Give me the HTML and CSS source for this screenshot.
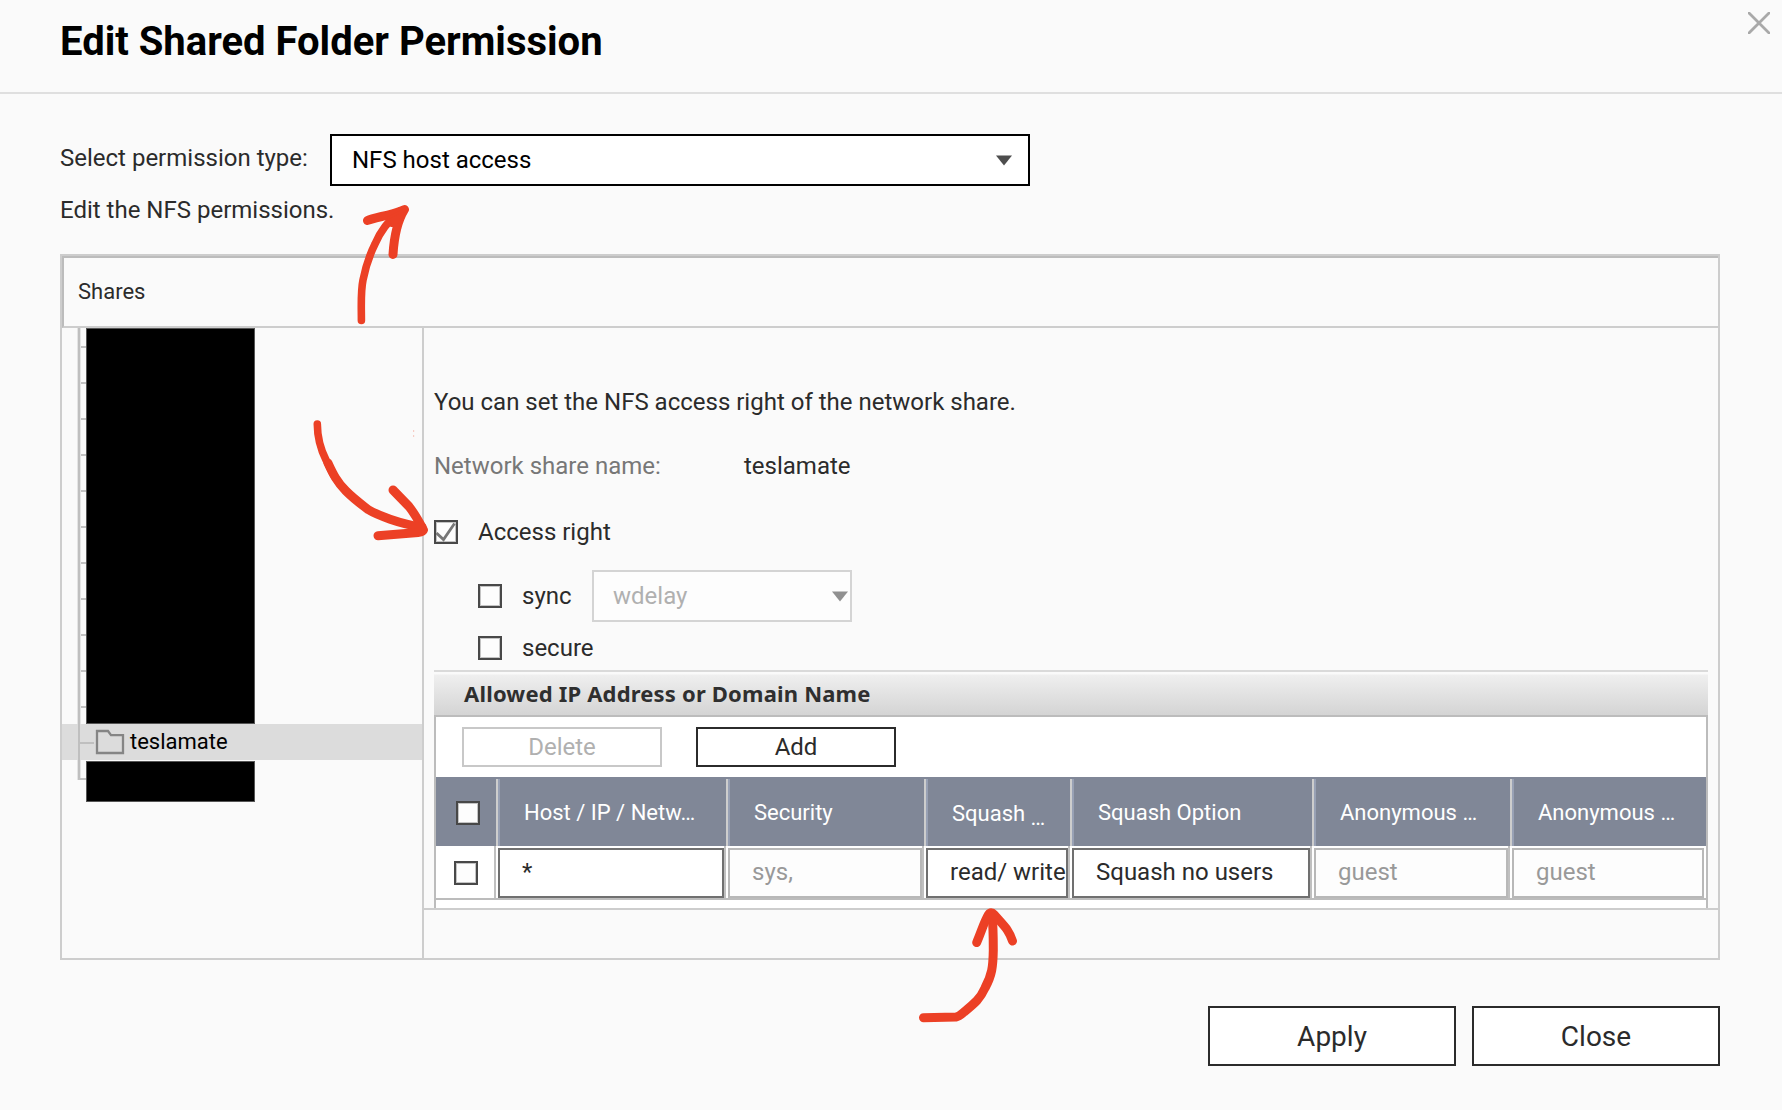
FILE: index.html
```html
<!DOCTYPE html>
<html lang="en">
<head>
<meta charset="utf-8">
<title>Edit Shared Folder Permission</title>
<link rel="stylesheet" href="styles.css">
</head>
<body>
<main class="dialog">
  <header class="dialog-header">
    <h1 class="title">Edit Shared Folder Permission</h1>
    <svg class="close-icon" viewBox="0 0 22 22" aria-label="Close"><path d="M0 0L22 22M22 0L0 22"/></svg>
  </header>

  <section class="type-row">
    <span class="type-label">Select permission type:</span>
    <div class="select type-select"><span>NFS host access</span><svg class="caret" viewBox="0 0 16 11"><path d="M0 0.5H16L8 10.5Z"/></svg></div>
  </section>
  <p class="hint">Edit the NFS permissions.</p>

  <section class="panel">
    <div class="panel-head">Shares</div>
    <div class="panel-body">
      <nav class="tree">
        <div class="tree-group">
          <div class="tree-ticks"></div>
          <div class="redacted"></div>
        </div>
        <div class="tree-item">
          <span class="branch"></span>
          <svg class="folder" viewBox="0 0 30 26"><path d="M2 2H13L16 6.2H28V24H2Z"/></svg>
          <span>teslamate</span>
        </div>
        <div class="tree-group tail">
          <div class="tree-end"></div>
          <div class="redacted"></div>
        </div>
      </nav>

      <div class="details">
        <div class="details-main">
          <p class="intro">You can set the NFS access right of the network share.</p>
          <div class="share-name"><span class="share-label">Network share name:</span><span>teslamate</span></div>
          <div class="check-row access">
            <span class="checkbox"><svg viewBox="0 0 20 20"><path d="M0.5 11L7.5 17.5L18.5 1.5"/></svg></span><span>Access right</span>
          </div>
          <div class="check-row sync">
            <span class="checkbox"></span><span class="sync-text">sync</span>
            <div class="select delay-select"><span>wdelay</span><svg class="caret" viewBox="0 0 16 11"><path d="M0 0.5H16L8 10.5Z"/></svg></div>
          </div>
          <div class="check-row secure"><span class="checkbox"></span><span>secure</span></div>

          <div class="hosts">
            <div class="hosts-title"><span>Allowed IP Address or Domain Name</span></div>
            <div class="hosts-body">
              <div class="toolbar">
                <button class="btn small disabled">Delete</button>
                <button class="btn small">Add</button>
              </div>
              <div class="grid grid-head">
                <div class="th th-check"><span class="checkbox"></span></div>
                <div class="th">Host / IP / Netw…</div>
                <div class="th">Security</div>
                <div class="th th-low">Squash <span class="dots">…</span></div>
                <div class="th">Squash Option</div>
                <div class="th">Anonymous …</div>
                <div class="th">Anonymous …</div>
              </div>
              <div class="grid grid-row">
                <div class="td td-check"><span class="checkbox"></span></div>
                <div class="td"><div class="field">*</div></div>
                <div class="td"><div class="field muted">sys,</div></div>
                <div class="td"><div class="field">read/ write</div></div>
                <div class="td"><div class="field">Squash no users</div></div>
                <div class="td"><div class="field muted">guest</div></div>
                <div class="td"><div class="field muted">guest</div></div>
              </div>
            </div>
          </div>
        </div>
      </div>
    </div>
  </section>

  <footer class="actions">
    <button class="btn large">Apply</button>
    <button class="btn large">Close</button>
  </footer>

  <svg class="annotations" viewBox="0 0 1782 1110">
    <path class="thin" d="M361.4 320.5C361.4 306 360.500 292 363 280C366 265 370 254 375 244C380 232 388 221 400 211"/>
    <path d="M367.500 220.500C375 217 390 216 404.500 209.500C398 220 394 238 393 254.500"/>
    <path class="fill" d="M388 218L404 210L398 226L391 226Z"/>
    <path class="thin" d="M317.300 424C317.400 440 321 450 326 460C332 473 336 481 346 491"/>
    <path d="M328 463C333 474 337 482 346 491C354 499 361 504 368 509.500C377 515 400 524 422 527"/>
    <path d="M393 490L409 506.500Q415 514 423.500 530Q423 532 418 532.500L378 535.700"/>
    <path d="M923.500 1017.700L956 1017Q959 1016.500 964 1012C975 1003 980 999 985 988C992 975 993 967 993.300 950C993.300 935 993 924 992 914"/>
    <path d="M976.700 942.500C982 930 984 922 988.500 914.500Q991 911 994 914.500C1005 927 1009 930 1012.500 941"/>
    <path class="specks" d="M413 431h1.200M413 436h1.200"/>
  </svg>
</main>
</body>
</html>
```
FILE: styles.css
```css
* { box-sizing: border-box; }

body {
  margin: 0;
  background: #fafafa;
  color: #2b2b2b;
  font: 24px Roboto, "Liberation Sans", sans-serif;
}

p, h1 { margin: 0; }

.dialog {
  position: relative;
  width: 1782px;
  height: 1110px;
  overflow: hidden;
}

.dialog-header {
  display: flex;
  justify-content: space-between;
  align-items: flex-start;
  height: 94px;
  padding: 0 12px 0 60px;
  border-bottom: 2px solid #dfdfdf;
}

.title {
  color: #000;
  font-size: 40px;
  font-weight: 700;
  line-height: 84px;
  white-space: nowrap;
}

.close-icon {
  width: 22px;
  height: 22px;
  margin-top: 12px;
  fill: none;
  stroke: #a9a9a9;
  stroke-width: 2.8;
}

.type-row {
  display: flex;
  align-items: flex-start;
  margin-top: 40px;
  padding-left: 60px;
}

.type-label {
  width: 270px;
  line-height: 48px;
  white-space: nowrap;
}

.select {
  display: flex;
  align-items: center;
  justify-content: space-between;
  height: 52px;
  border: 2px solid #000;
  background: #fff;
}

.caret {
  width: 16px;
  height: 11px;
  fill: #4d4d4d;
}

.type-select {
  width: 700px;
  padding: 0 16px 0 20px;
  color: #000;
}

.hint {
  padding-left: 60px;
  line-height: 48px;
}

.panel {
  width: 1660px;
  height: 706px;
  margin: 20px 0 0 60px;
  border: 2px solid #cdcdcd;
}

.panel-head {
  height: 72px;
  padding-left: 14px;
  border-top: 2px solid #bcbcbc;
  border-left: 2px solid #bcbcbc;
  border-bottom: 2px solid #cdcdcd;
  font-size: 22px;
  line-height: 68px;
}

.panel-body {
  display: flex;
  height: 630px;
}

.tree {
  width: 362px;
  border-right: 2px solid #cdcdcd;
}

.tree-group {
  display: flex;
  height: 396px;
  padding-left: 16px;
}

.tree-ticks {
  width: 8px;
  border-left: 2px solid #bfbfbf;
  background: repeating-linear-gradient(to bottom, transparent 0 18px, #c2c2c2 18px 20px, transparent 20px 36px);
  box-shadow: -1px 0 #e4e4e4, inset 1px 0 #e4e4e4;
}

.redacted {
  width: 169px;
  height: 396px;
  background: #000;
  border: 1px solid #555;
}

.tree-item {
  display: flex;
  align-items: center;
  height: 36px;
  padding-left: 16px;
  background: #dcdcdc;
  color: #000;
  font-size: 22px;
  line-height: 34px;
}

.branch {
  width: 16px;
  height: 36px;
  border-left: 2px solid #bfbfbf;
  background: linear-gradient(#bfbfbf, #bfbfbf) 0 18px / 14px 2px no-repeat;
}

.folder {
  width: 30px;
  height: 26px;
  margin: 0 5px 0 1px;
  fill: none;
  stroke: #858585;
  stroke-width: 2.3;
}

.tree-group.tail { height: 42px; }
.tail .redacted { height: 41px; margin-top: 1px; }

.tree-end {
  width: 8px;
  height: 20px;
  border-left: 2px solid #bfbfbf;
  border-bottom: 2px solid #c2c2c2;
  box-shadow: -1px 0 #e4e4e4, inset 1px 0 #e4e4e4;
}

.details { flex: 1; }

.details-main {
  height: 582px;
  padding: 56px 10px 0 10px;
  border-bottom: 2px solid #cdcdcd;
}

.intro, .share-name { line-height: 36px; }

.share-name {
  display: flex;
  margin-top: 28px;
}

.share-label {
  width: 310px;
  color: #777;
}

.check-row {
  display: flex;
  align-items: center;
  gap: 20px;
}

.checkbox {
  display: block;
  width: 24px;
  height: 24px;
  border: 2px solid #484848;
  background: #fdfdfd;
  box-shadow: inset 0 0 0 1px #c4c4c4;
}

.checkbox svg {
  display: block;
  width: 20px;
  height: 20px;
  fill: none;
  stroke: #777;
  stroke-width: 2.8;
}

.access { height: 24px; margin-top: 36px; }

.sync {
  height: 52px;
  margin-top: 26px;
  padding-left: 44px;
}

.sync-text { width: 50px; }

.delay-select {
  width: 260px;
  padding: 0 2px 0 19px;
  border-color: #d4d4d4;
  background: #fdfdfd;
  color: #b0b0b0;
}

.delay-select .caret { fill: #909090; }

.secure {
  height: 24px;
  margin-top: 14px;
  padding-left: 44px;
}

.hosts { margin-top: 10px; }

.hosts-title {
  height: 47px;
  padding-left: 30px;
  border-top: 2px solid #dadada;
  border-bottom: 2px solid #bcbcbc;
  background: linear-gradient(to bottom, #fafafa 0, #fafafa 2px, #efefef 3px, #d4d4d4 100%);
  color: #2f2f2f;
  font: 700 22px/43px "Noto Sans", sans-serif;
  letter-spacing: 0.18px;
}

.hosts-body {
  height: 191px;
  border: solid #bcbcbc;
  border-width: 0 2px;
  background: #fff;
}

.toolbar {
  display: flex;
  gap: 34px;
  height: 60px;
  padding: 10px 26px;
}

.btn {
  padding: 0;
  border: 2px solid #2b2b2b;
  background: #fff;
  color: #2b2b2b;
  font-family: inherit;
}

.btn.small { width: 200px; height: 40px; font-size: 24px; }
.btn.large { width: 248px; height: 60px; font-size: 28px; }
.btn.disabled { border-color: #c8c8c8; color: #b0b0b0; }

.grid {
  display: grid;
  grid-template-columns: 60px 230px 198px 146px 242px 198px 196px;
}

.grid-head {
  height: 69px;
  background: #808797;
  color: #fff;
  font-size: 22px;
  line-height: 72px;
}

.th {
  height: 69px;
  padding-left: 28px;
  background: linear-gradient(to right, #cdcdcd 0 2px, #98a1b5 2px 4px) 0 2px / 4px 67px no-repeat;
  white-space: nowrap;
}

.th-check { padding: 24px 0 0 20px; background: none; }
.th-low { line-height: 74px; }
.dots { position: relative; top: 4px; }

.grid-row {
  height: 54px;
  border-bottom: 2px solid #bcbcbc;
}

.td {
  padding: 2px 0 0 2px;
  border-right: 2px solid #c0c0c0;
}

.td:last-child { border-color: transparent; }
.td-check { padding: 15px 0 0 18px; }

.field {
  height: 50px;
  padding-left: 22px;
  overflow: hidden;
  border: 2px solid #707070;
  line-height: 44px;
  white-space: nowrap;
}

.field.muted { border-color: #b8b8b8; background: #fdfdfd; color: #999; }

.actions {
  display: flex;
  justify-content: flex-end;
  gap: 16px;
  margin-top: 46px;
  padding-right: 62px;
}

/* Hand-drawn arrows lie over the dialog */
.annotations {
  position: absolute;
  inset: 0;
  width: 1782px;
  height: 1110px;
  fill: none;
  stroke: #ec4025;
  stroke-width: 9;
  stroke-linecap: round;
  stroke-linejoin: round;
  pointer-events: none;
}

.thin { stroke-width: 7.6; }
.fill { fill: #ec4025; stroke-width: 2; }
.specks { stroke-width: 1; stroke: #f2a090; stroke-linecap: butt; }
```
